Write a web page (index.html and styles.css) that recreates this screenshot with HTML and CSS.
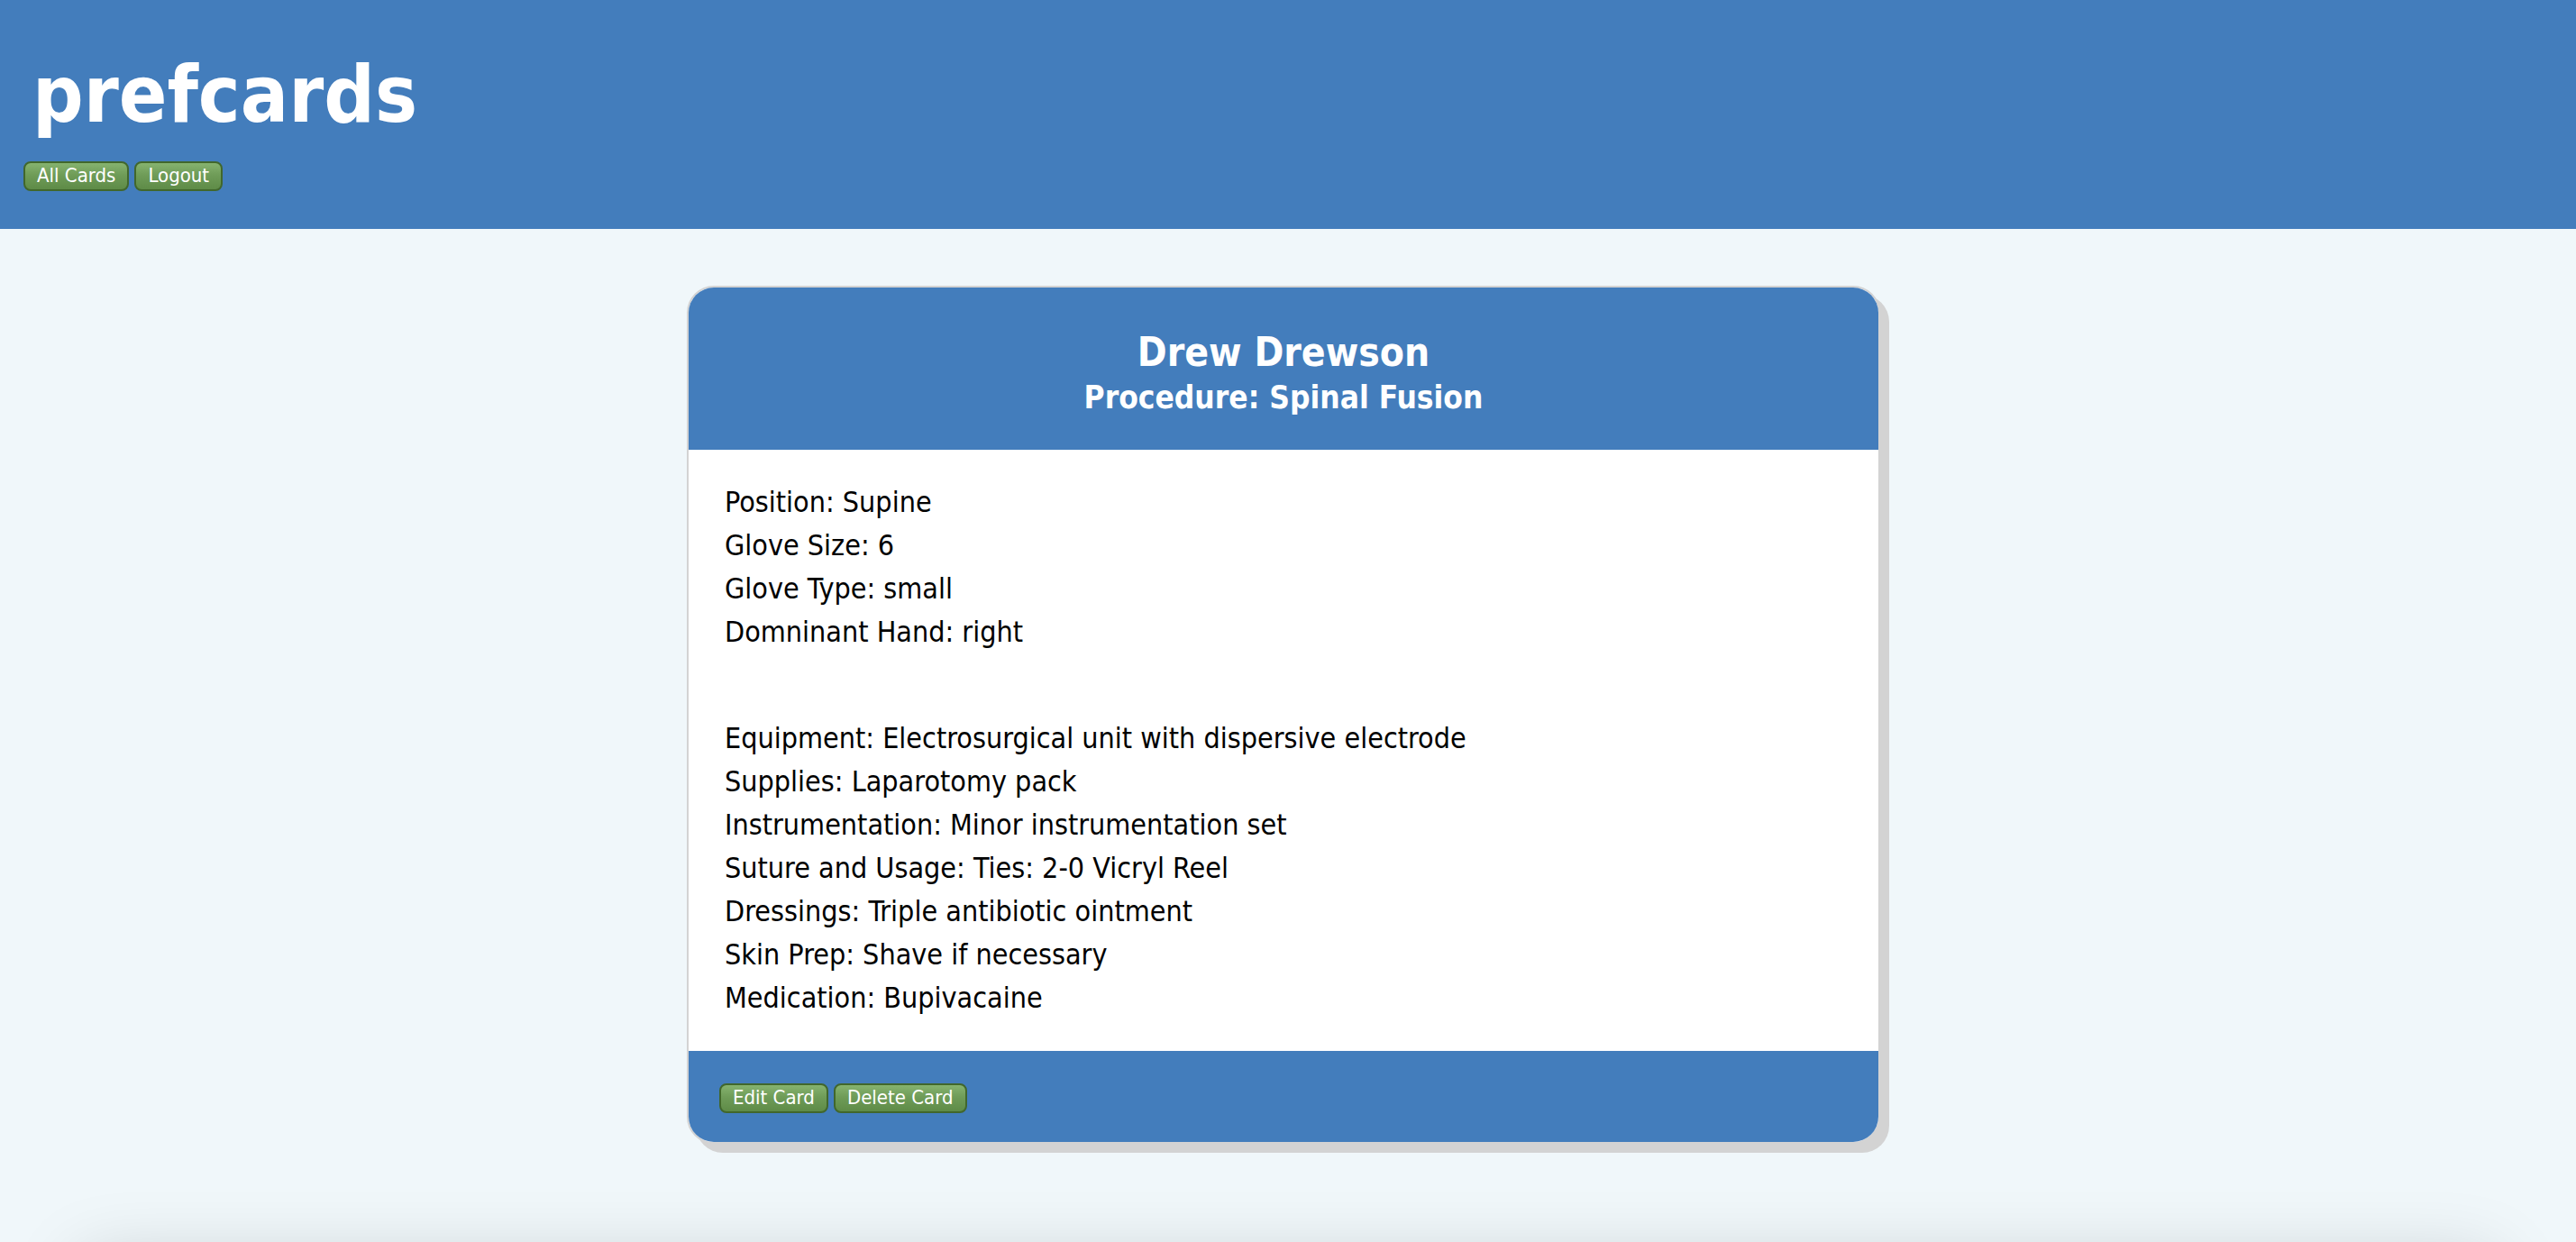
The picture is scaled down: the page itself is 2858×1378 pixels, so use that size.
FILE: index.html
```html
<!DOCTYPE html>
<html lang="en">
<head>
<meta charset="utf-8">
<title>prefcards</title>
<link rel="stylesheet" href="styles.css">
</head>
<body>
<header class="site-header">
  <h1 class="logo">prefcards</h1>
  <nav class="nav">
    <a class="btn" href="#">All Cards</a>
    <a class="btn" href="#">Logout</a>
  </nav>
</header>
<main class="main">
  <article class="card">
    <div class="card-head">
      <h2 class="card-name">Drew Drewson</h2>
      <h3 class="card-proc">Procedure: Spinal Fusion</h3>
    </div>
    <div class="card-body">
      <div class="group">
        <p class="line">Position: Supine</p>
        <p class="line">Glove Size: 6</p>
        <p class="line">Glove Type: small</p>
        <p class="line">Domninant Hand: right</p>
      </div>
      <div class="group">
        <p class="line">Equipment: Electrosurgical unit with dispersive electrode</p>
        <p class="line">Supplies: Laparotomy pack</p>
        <p class="line">Instrumentation: Minor instrumentation set</p>
        <p class="line">Suture and Usage: Ties: 2-0 Vicryl Reel</p>
        <p class="line">Dressings: Triple antibiotic ointment</p>
        <p class="line">Skin Prep: Shave if necessary</p>
        <p class="line">Medication: Bupivacaine</p>
      </div>
    </div>
    <div class="card-foot">
      <a class="btn" href="#">Edit Card</a>
      <a class="btn" href="#">Delete Card</a>
    </div>
  </article>
</main>
<footer class="page-foot"></footer>
</body>
</html>
```
FILE: styles.css
```css
* { box-sizing: border-box; }

html, body {
  margin: 0;
  padding: 0;
}

body {
  background: #f0f7fa;
  font-family: "DejaVu Sans Condensed", "DejaVu Sans", sans-serif;
  color: #000;
}

.site-header {
  background: #437dbc;
  height: 254px;
  padding: 57px 0 0 26px;
}

.logo {
  margin: 0 0 26px 10px;
  font-size: 88px;
  line-height: 96px;
  font-weight: bold;
  color: #fff;
  height: 96px;
}

.nav {
  display: flex;
  gap: 6px;
}

.btn {
  display: inline-flex;
  align-items: center;
  justify-content: center;
  height: 33px;
  padding: 0 13px 1px;
  border: 2px solid #41672c;
  border-radius: 8px;
  background: linear-gradient(#86b36f 0%, #6f9c58 45%, #5e8b47 100%);
  color: #fff;
  font-size: 22px;
  text-decoration: none;
  line-height: 1;
}

.main {
  padding: 63px 10px 0 0;
}

.card {
  width: 1324px;
  margin: 0 auto 130px;
  border: 2px solid #d3d3d3;
  border-radius: 30px;
  box-shadow: 10px 10px 0 #d3d3d3;
  overflow: hidden;
  background: #fff;
}

.card-head {
  background: #437dbc;
  color: #fff;
  text-align: center;
  padding: 44px 0 36px;
}

.card-name {
  margin: 0;
  font-size: 44px;
  line-height: 56px;
  font-weight: bold;
}

.card-proc {
  margin: 0;
  font-size: 35px;
  line-height: 44px;
  font-weight: bold;
}

.card-body {
  padding: 34px 40px 35px;
  display: flex;
  flex-direction: column;
  gap: 70px;
}

.line {
  margin: 0;
  font-size: 32px;
  line-height: 48px;
}

.card-foot {
  background: #437dbc;
  padding: 36px 34px 32px;
  display: flex;
  gap: 6px;
}

.page-foot {
  margin: 0 90px;
  height: 100px;
  background: #f0f7fa;
  box-shadow: 0 0 80px rgba(0, 0, 0, 0.18);
}
```
